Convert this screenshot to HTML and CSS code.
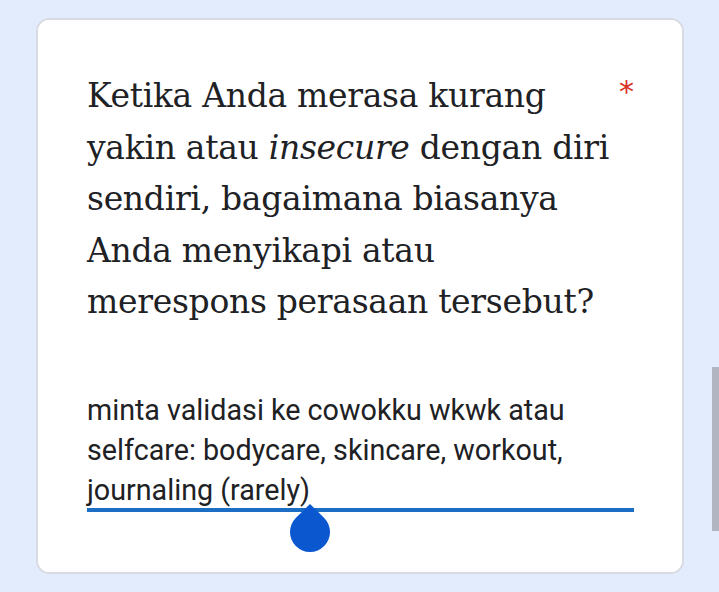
FILE: index.html
```html
<!DOCTYPE html>
<html>
<head>
<meta charset="utf-8">
<link rel="stylesheet" href="styles.css">
</head>
<body>
<div class="page">
  <div class="card">
    <div class="question">
      <div class="title">Ketika Anda merasa kurang<br>yakin atau <em>insecure</em> dengan diri<br>sendiri, bagaimana biasanya<br>Anda menyikapi atau<br>merespons perasaan tersebut?</div>
      <div class="req">*</div>
    </div>
    <div class="answer">
      <div class="answer-text">minta validasi ke cowokku wkwk atau selfcare: bodycare, skincare, workout, journaling (rarely)</div>
      <div class="underline">
        <svg class="thumb" width="40" height="48" viewBox="0 0 40 48"><path d="M20 0 L34 13.7 A20 20 0 1 1 6 13.7 Z" fill="#0b57d0"/></svg>
      </div>
    </div>
  </div>
  <div class="scrollbar"></div>
</div>
</body>
</html>
```
FILE: styles.css
```css
html, body {
  margin: 0;
  padding: 0;
  background: #e3ecfc;
}
.page {
  position: relative;
  width: 719px;
  height: 592px;
  padding-top: 18px;
  padding-left: 36px;
  box-sizing: border-box;
}
.card {
  width: 648px;
  height: 556px;
  box-sizing: border-box;
  background: #fff;
  border: 2px solid #d8dce2;
  border-radius: 13px;
  padding: 50px 48px 0 49px;
}
.question {
  display: flex;
  justify-content: space-between;
}
.title {
  font-family: "DejaVu Serif", serif;
  font-size: 33px;
  line-height: 51.5px;
  color: #202124;
  letter-spacing: -0.3px;
}
.title em {
  font-style: italic;
}
.req {
  font-family: "DejaVu Sans", sans-serif;
  color: #d93025;
  font-size: 30px;
  line-height: 40px;
  padding-top: 2px;
  margin-right: 0;
}
.answer {
  margin-top: 62px;
}
.answer-text {
  font-family: Roboto, sans-serif;
  font-size: 28.7px;
  line-height: 40px;
  color: #202124;
}
.underline {
  position: relative;
  height: 4px;
  background: #1b6ec4;
  margin-top: -2px;
}
.thumb {
  position: absolute;
  left: 203px;
  top: -4px;
}
.scrollbar {
  position: absolute;
  left: 712px;
  top: 367px;
  width: 7px;
  height: 164px;
  background: #b0b5c1;
}
```
